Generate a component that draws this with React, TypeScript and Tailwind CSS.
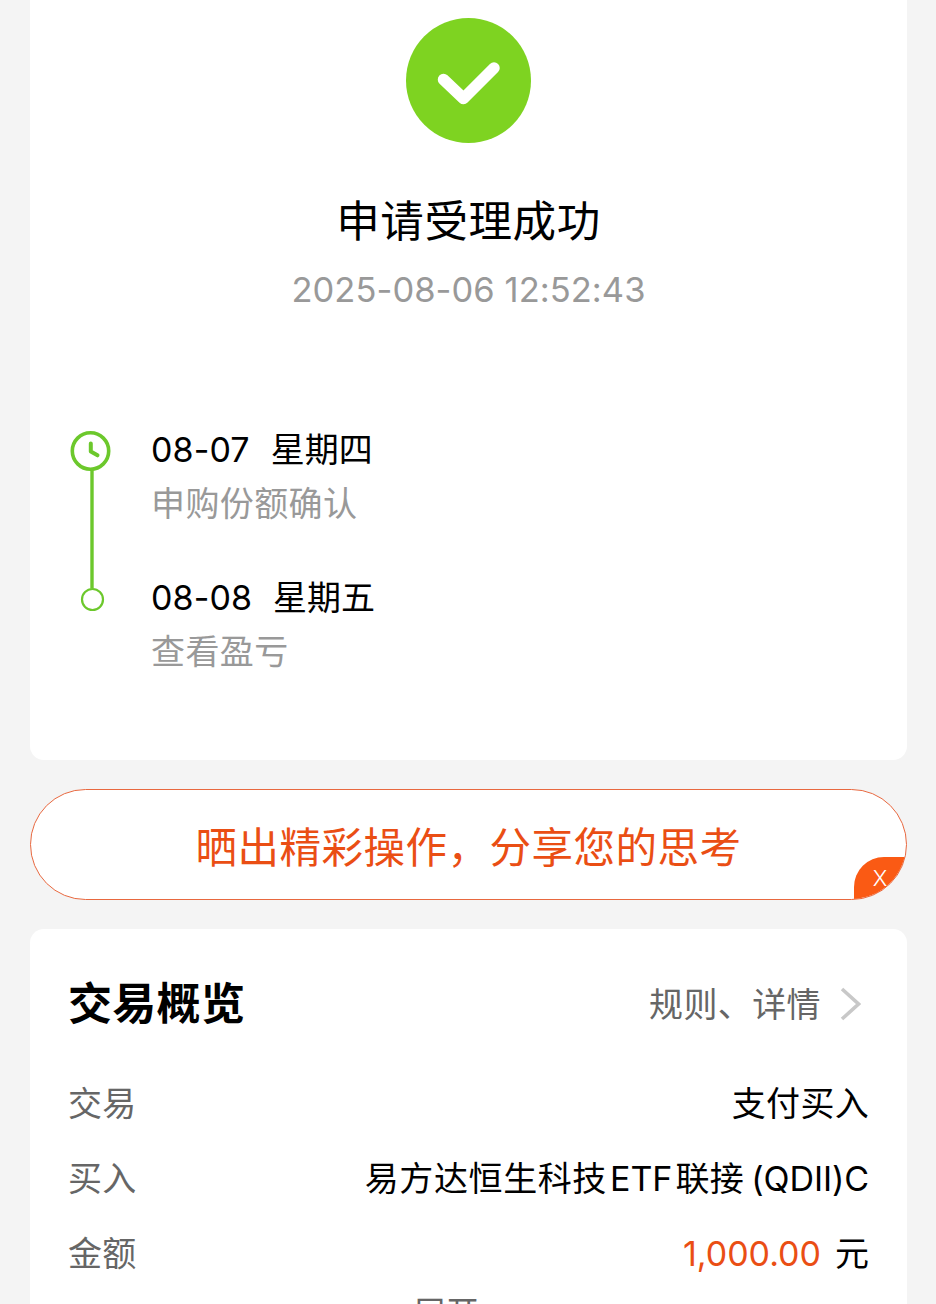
const steps = [
  { date: "08-07", day: "星期四", text: "申购份额确认" },
  { date: "08-08", day: "星期五", text: "查看盈亏" },
];

function SuccessIcon() {
  return (
    <svg className="size-[125px]" viewBox="0 0 125 125" fill="none">
      <circle cx="62.5" cy="62.5" r="62.5" fill="#7ed321" />
      <path
        d="M37.5 61.5L57.5 80.5L88 50"
        stroke="#fff"
        strokeWidth="11.5"
        strokeLinecap="round"
        strokeLinejoin="round"
      />
    </svg>
  );
}

function TimelineTrack() {
  return (
    <svg className="w-[42px] h-[182px] shrink-0" viewBox="0 0 42 182" fill="none" stroke="#6cc82c">
      <circle cx="20.5" cy="21" r="18.2" strokeWidth="3.6" />
      <path d="M20.8 13.5V21.5L27.5 25.3" strokeWidth="4" strokeLinecap="round" strokeLinejoin="round" />
      <path d="M22 40V158.5" strokeWidth="3.4" />
      <circle cx="22.5" cy="169.5" r="10.5" strokeWidth="2.2" />
    </svg>
  );
}

function Row({ label, children }: { label: string; children: React.ReactNode }) {
  return (
    <div className="h-[75px] flex items-center justify-between">
      <span className="text-[#666] tracking-[0.2px]">{label}</span>
      <span className="flex items-center">{children}</span>
    </div>
  );
}

export default function App() {
  return (
    <div className="h-[1304px] w-[936px] overflow-hidden bg-[#f4f4f4] pl-[30px] pr-[29px] flex flex-col font-['Inter','Noto_Sans_CJK_SC',sans-serif] text-[34px] leading-[50px] text-black">
      {/* Result */}
      <div className="h-[760px] shrink-0 rounded-b-[14px] bg-white pt-[18px]">
        <div className="flex flex-col items-center">
          <SuccessIcon />
          <h1 className="mt-[48px] text-[43.5px] leading-[60px] tracking-[0.6px]">申请受理成功</h1>
          <p className="mt-[14px] text-[34.5px] tracking-[0.05px] text-[#999]">2025-08-06 12:52:43</p>
        </div>
        <div className="mt-[115px] flex pl-[40px]">
          <TimelineTrack />
          <div className="ml-[39px] -mt-[5px] flex flex-col gap-[44px]">
            {steps.map((step) => (
              <div key={step.date} className="h-[104px]">
                <p className="flex gap-[21px]">
                  <span className="tracking-[0.1px]">{step.date}</span>
                  <span>{step.day}</span>
                </p>
                <p className="mt-[4px] text-[#999] tracking-[0.4px]">{step.text}</p>
              </div>
            ))}
          </div>
        </div>
      </div>

      {/* Share */}
      <button className="relative mt-[29px] h-[111px] shrink-0 overflow-hidden rounded-full border border-[#e8683f] bg-white pt-[6px] text-[41.5px] tracking-[0.5px] text-[#ea4e14]">
        晒出精彩操作，分享您的思考
        <span className="absolute right-0 bottom-0 h-[42px] w-[52px] rounded-tl-[30px] bg-[#fa5a14] text-center text-[22px] font-light leading-[42px] tracking-normal text-white">
          X
        </span>
      </button>

      {/* Overview */}
      <div className="mt-[29px] h-[420px] shrink-0 rounded-t-[14px] bg-white px-[38px] pt-[45px]">
        <div className="flex h-[60px] items-center justify-between">
          <h2 className="text-[44px] font-bold leading-[60px] tracking-[0.3px]">交易概览</h2>
          <div className="flex items-center gap-[19px] pr-[8px] text-[#666]">
            <span className="pt-[2px] tracking-[0.4px]">规则、详情</span>
            <svg className="h-[34px] w-[21px]" viewBox="0 0 21 34" fill="none">
              <path d="M2 2L18.5 17L2 32" stroke="#c8c8c8" strokeWidth="3.6" />
            </svg>
          </div>
        </div>
        <div className="mt-[32px]">
          <Row label="交易">
            <span className="tracking-[0.3px]">支付买入</span>
          </Row>
          <Row label="买入">
            <span className="tracking-[0.6px]">易方达恒生科技</span>
            <span className="ml-[3px]">ETF</span>
            <span className="ml-[3px] tracking-[0.4px]">联接</span>
            <span className="ml-[7px] tracking-[-0.1px]">(QDII)C</span>
          </Row>
          <Row label="金额">
            <span className="text-[#ea4e14]">1,000.00</span>
            <span className="ml-[14px]">元</span>
          </Row>
        </div>
        <p className="-mt-[3px] pr-[45px] text-center text-[33px] text-[#666]">展开</p>
      </div>
    </div>
  );
}
